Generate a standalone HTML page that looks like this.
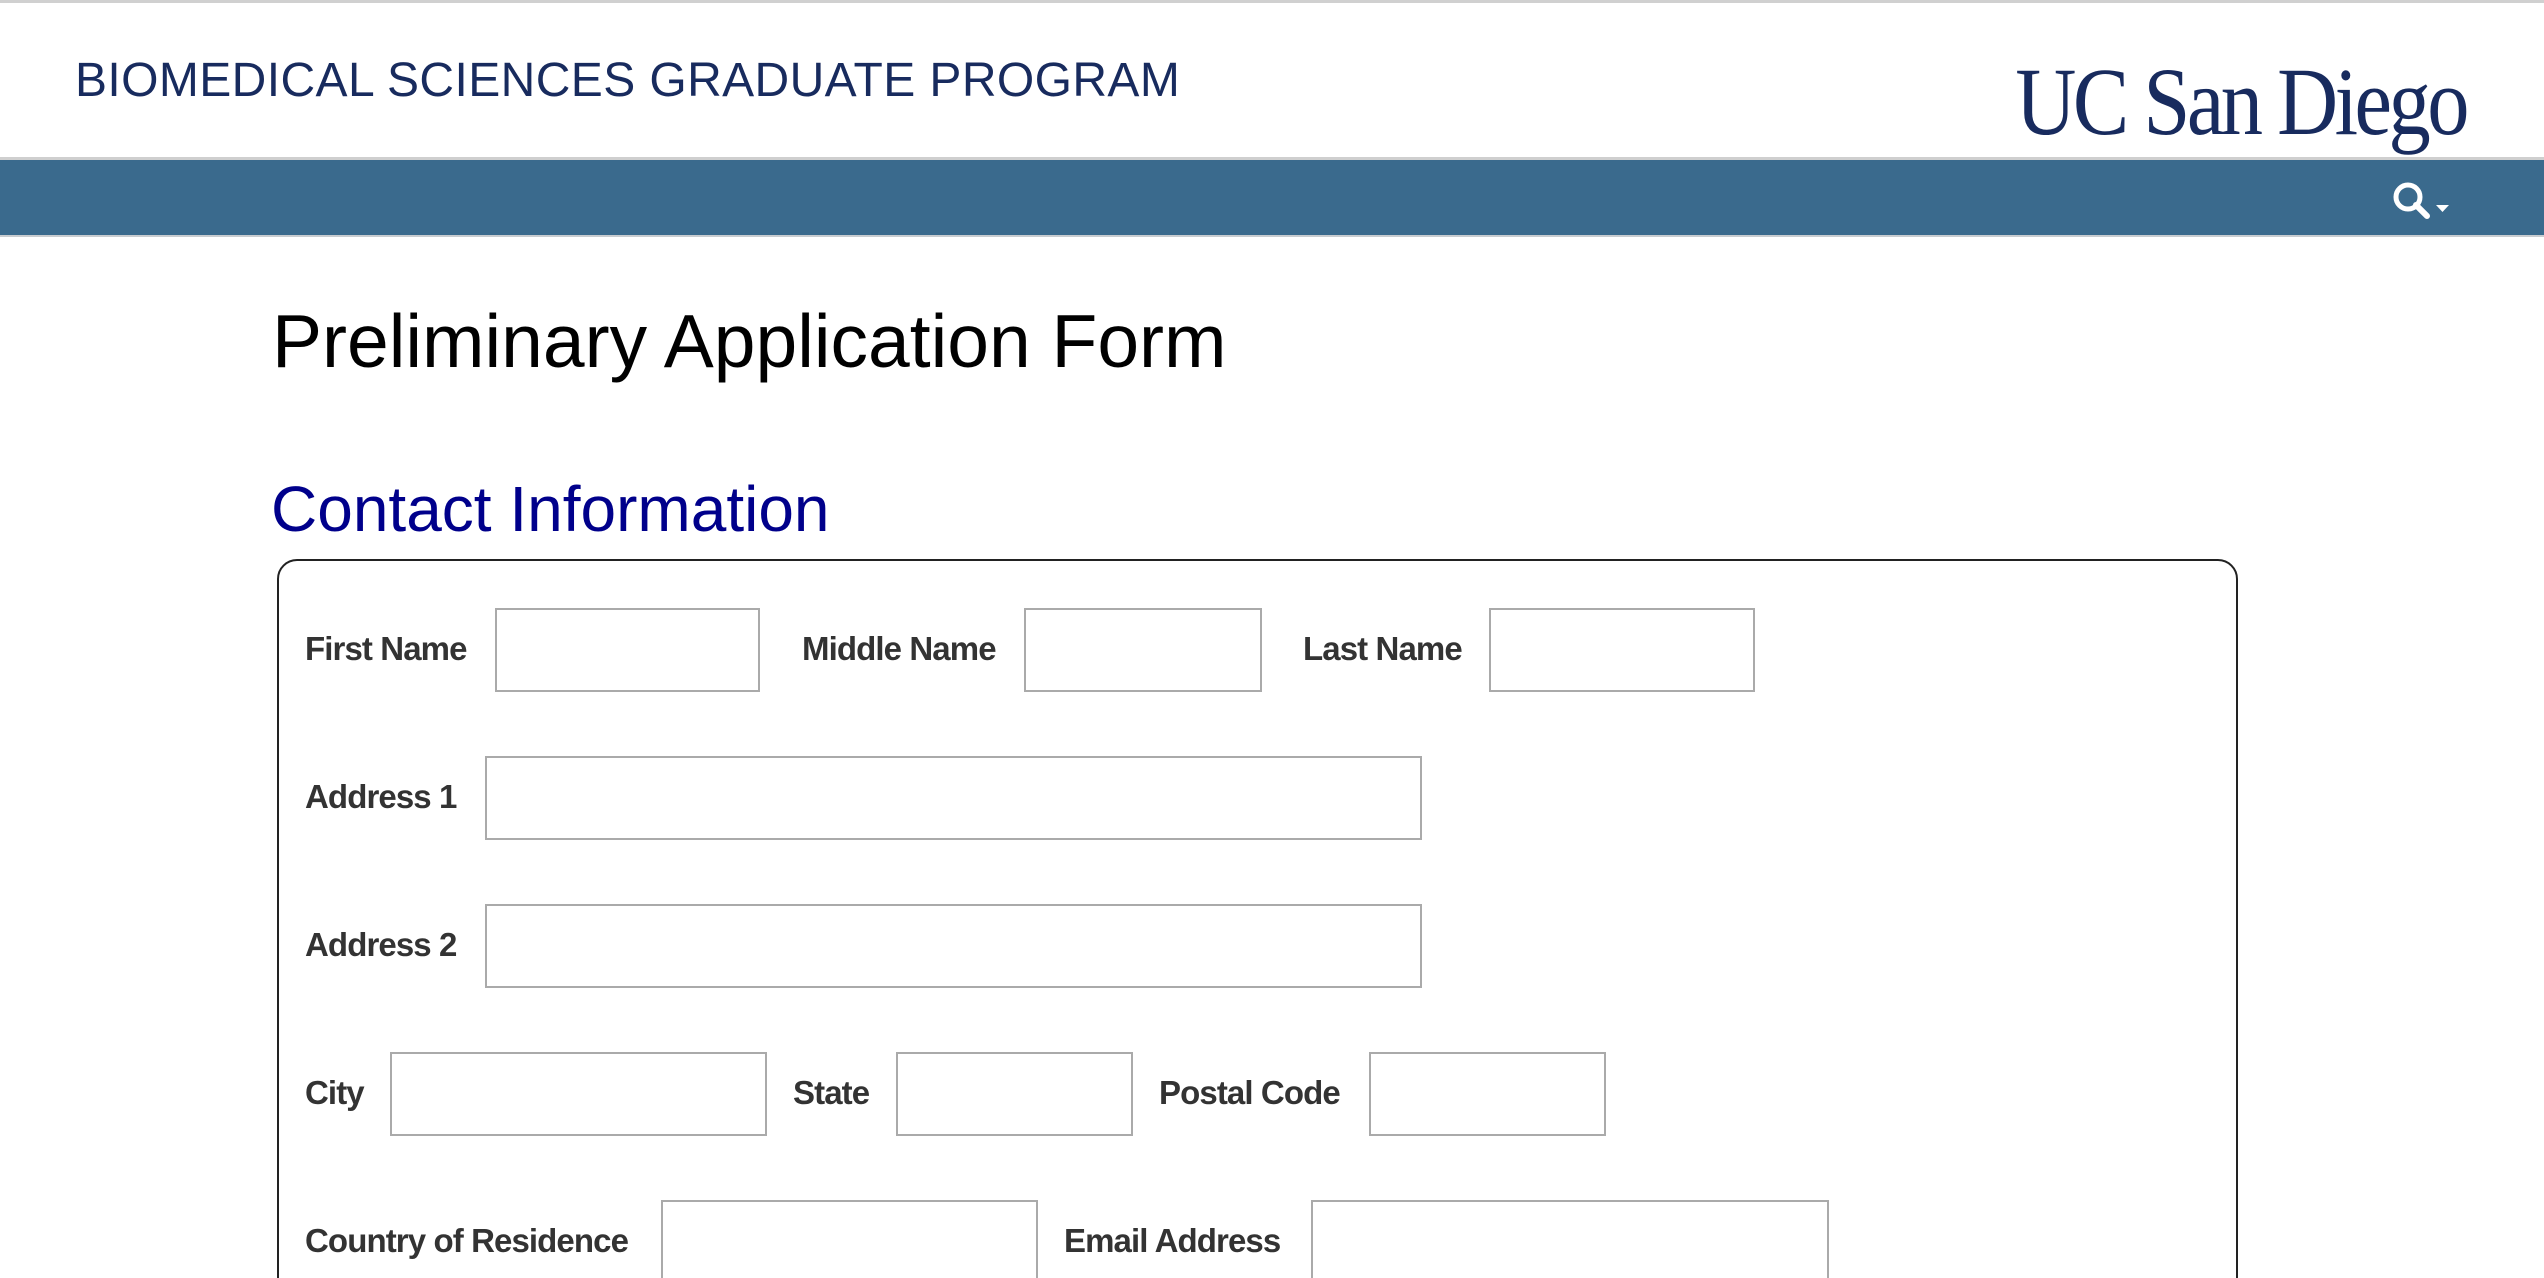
<!DOCTYPE html>
<html><head><meta charset="utf-8">
<style>
html,body{margin:0;padding:0;background:#fff;width:2544px;height:1278px;overflow:hidden;position:relative;font-family:"Liberation Sans",Arial,sans-serif;}
.wrap{position:absolute;left:0;top:0;width:2544px;height:1278px;overflow:hidden;}
.topline{position:absolute;left:0;top:0;width:2544px;height:3px;background:#d0d0d0;}
.site{position:absolute;left:75px;top:53px;font-size:48px;color:#182b5e;letter-spacing:0.4px;white-space:nowrap;}
.logo{position:absolute;right:78px;top:46px;font-family:"Liberation Serif",serif;font-size:96px;color:#182b5e;white-space:nowrap;transform:scaleX(0.88);transform-origin:right top;letter-spacing:-4px;}
.hline{position:absolute;left:0;top:157px;width:2544px;height:3px;background:#cfcfcf;}
.bar{position:absolute;left:0;top:160px;width:2544px;height:75px;background:#3a6a8d;}
.bline{position:absolute;left:0;top:235px;width:2544px;height:2px;background:#c8ccd0;}
h1{position:absolute;left:272px;top:298px;margin:0;font-weight:normal;font-size:75px;color:#000;white-space:nowrap;}
h2{position:absolute;left:271px;top:472px;margin:0;font-weight:normal;font-size:64px;color:#00008b;white-space:nowrap;}
.box{position:absolute;left:277px;top:559px;width:1957px;height:800px;border:2px solid #222;border-radius:20px;}
.lbl{position:absolute;font-weight:bold;font-size:33px;letter-spacing:-0.9px;color:#333;white-space:nowrap;line-height:40px;}
.in{position:absolute;border:2px solid #aaa;box-sizing:border-box;background:#fff;}
</style></head><body><div class="wrap">
<div class="topline"></div>
<div class="site">BIOMEDICAL SCIENCES GRADUATE PROGRAM</div>
<div class="logo">UC San Diego</div>
<div class="hline"></div>
<div class="bar"></div>
<div class="bline"></div>
<svg style="position:absolute;left:2385px;top:180px" width="70" height="45" viewBox="2385 180 70 45">
<circle cx="2408" cy="197" r="12" fill="none" stroke="#fff" stroke-width="5"/>
<line x1="2416" y1="205" x2="2427" y2="216" stroke="#fff" stroke-width="6" stroke-linecap="round"/>
<polygon points="2436,205 2449,205 2442.5,212" fill="#fff"/>
</svg>
<h1>Preliminary Application Form</h1>
<h2>Contact Information</h2>
<div class="box"></div>

<div class="lbl" style="left:305px;top:629px">First Name</div>
<div class="in" style="left:495px;top:608px;width:265px;height:84px"></div>
<div class="lbl" style="left:802px;top:629px">Middle Name</div>
<div class="in" style="left:1024px;top:608px;width:238px;height:84px"></div>
<div class="lbl" style="left:1303px;top:629px">Last Name</div>
<div class="in" style="left:1489px;top:608px;width:266px;height:84px"></div>

<div class="lbl" style="left:305px;top:777px">Address 1</div>
<div class="in" style="left:485px;top:756px;width:937px;height:84px"></div>

<div class="lbl" style="left:305px;top:925px">Address 2</div>
<div class="in" style="left:485px;top:904px;width:937px;height:84px"></div>

<div class="lbl" style="left:305px;top:1073px">City</div>
<div class="in" style="left:390px;top:1052px;width:377px;height:84px"></div>
<div class="lbl" style="left:793px;top:1073px">State</div>
<div class="in" style="left:896px;top:1052px;width:237px;height:84px"></div>
<div class="lbl" style="left:1159px;top:1073px">Postal Code</div>
<div class="in" style="left:1369px;top:1052px;width:237px;height:84px"></div>

<div class="lbl" style="left:305px;top:1221px">Country of Residence</div>
<div class="in" style="left:661px;top:1200px;width:377px;height:84px"></div>
<div class="lbl" style="left:1064px;top:1221px">Email Address</div>
<div class="in" style="left:1311px;top:1200px;width:518px;height:84px"></div>
</div></body></html>
